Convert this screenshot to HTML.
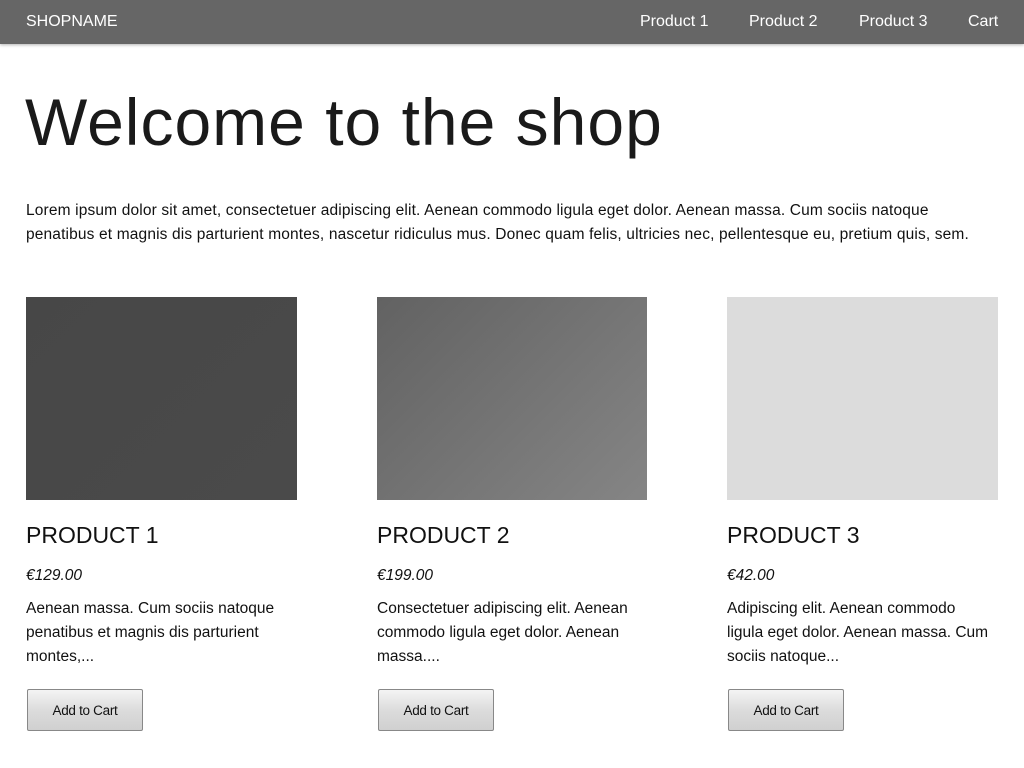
<!DOCTYPE html>
<html><head><meta charset="utf-8"><style>
*{margin:0;padding:0;box-sizing:border-box}
body{width:1024px;height:768px;background:#fff;font-family:"Liberation Sans",sans-serif;color:#111;overflow:hidden;position:relative}
.nav{position:absolute;left:0;top:0;width:1024px;height:44px;background:#666;box-shadow:0 1px 3px rgba(0,0,0,.3)}
.nav span{position:absolute;top:13px;color:#fff;font-size:16px}
h1{position:absolute;left:25px;top:84px;font-size:66px;font-weight:normal;letter-spacing:1px;color:#1a1a1a}
.intro{position:absolute;left:26px;top:199px;width:975px;font-size:15.5px;line-height:24px;color:#111;letter-spacing:.15px}
.card{position:absolute;top:297px;width:272px}
.img{width:271px;height:203px}
.card h2{position:absolute;top:225px;font-size:23px;font-weight:normal;color:#111;white-space:nowrap}
.price{position:absolute;top:270px;font-size:15.5px;font-style:italic}
.desc{position:absolute;top:300px;font-size:15.5px;line-height:24px;width:266px}
.btn{position:absolute;top:392px;left:1px;width:116px;height:42px;border:1px solid #888;border-radius:2px;background:linear-gradient(#f4f4f4,#dcdcdc 50%,#d0d0d0);font-size:13.5px;text-align:center;line-height:41px;color:#111;letter-spacing:-0.3px}
</style></head><body>
<div class="nav"><span style="left:26px">SHOPNAME</span><span style="left:640px">Product 1</span><span style="left:749px">Product 2</span><span style="left:859px">Product 3</span><span style="left:968px">Cart</span></div>
<h1>Welcome to the shop</h1>
<div class="intro">Lorem ipsum dolor sit amet, consectetuer adipiscing elit. Aenean commodo ligula eget dolor. Aenean massa. Cum sociis natoque penatibus et magnis dis parturient montes, nascetur ridiculus mus. Donec quam felis, ultricies nec, pellentesque eu, pretium quis, sem.</div>
<div class="card" style="left:26px"><div class="img" style="background:linear-gradient(135deg,#474747,#4a4a4a)"></div><h2>PRODUCT 1</h2><div class="price">€129.00</div><div class="desc">Aenean massa. Cum sociis natoque penatibus et magnis dis parturient montes,...</div><div class="btn">Add to Cart</div></div>
<div class="card" style="left:377px"><div class="img" style="width:270px;background:linear-gradient(135deg,#626262,#858585)"></div><h2>PRODUCT 2</h2><div class="price">€199.00</div><div class="desc">Consectetuer adipiscing elit. Aenean commodo ligula eget dolor. Aenean massa....</div><div class="btn">Add to Cart</div></div>
<div class="card" style="left:727px"><div class="img" style="background:#dcdcdc"></div><h2>PRODUCT 3</h2><div class="price">€42.00</div><div class="desc">Adipiscing elit. Aenean commodo ligula eget dolor. Aenean massa. Cum sociis natoque...</div><div class="btn">Add to Cart</div></div>
</body></html>
